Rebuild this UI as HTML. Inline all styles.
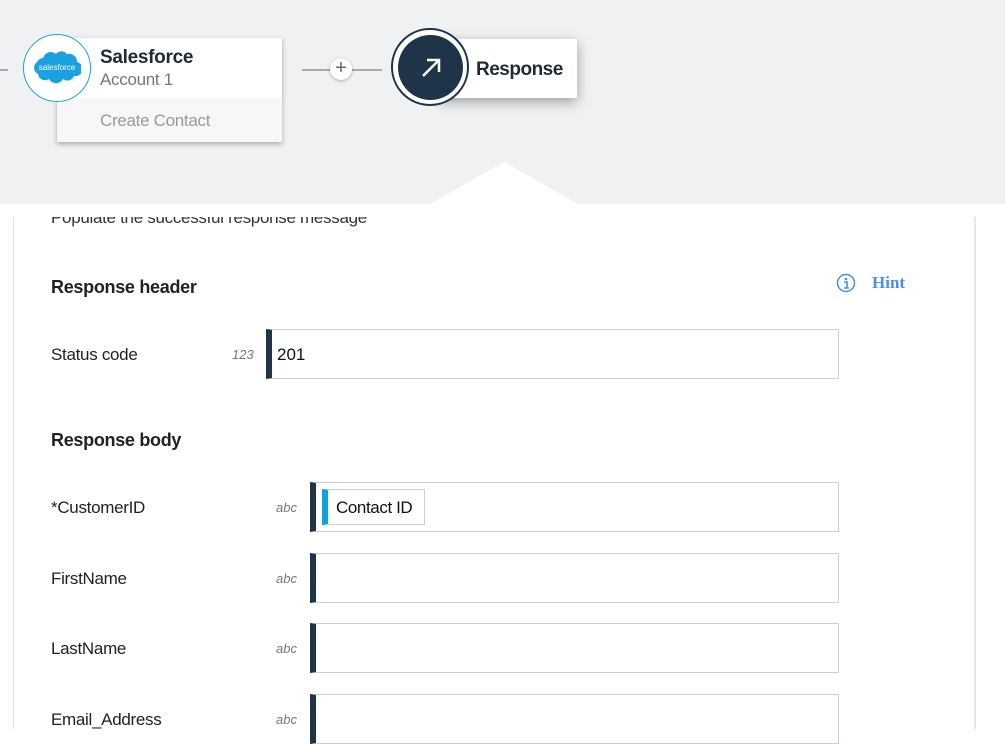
<!DOCTYPE html>
<html><head><meta charset="utf-8"><style>
body{margin:0;width:1005px;height:729px;overflow:hidden;background:#fff;font-family:"Liberation Sans",Arial,sans-serif;position:relative}
.top{position:absolute;left:0;top:0;width:1005px;height:204px;background:#f0f1f3;z-index:2;overflow:hidden}
.abs{position:absolute}
.lbl{position:absolute;left:51px;font-size:17px;color:#222;letter-spacing:-0.3px}
.typ{position:absolute;font-size:13px;font-style:italic;color:#777}
.fld{position:absolute;left:310px;width:529px;height:50px;border:1px solid #c8d0d2;border-left:6px solid #1f3349;box-sizing:border-box}
h3{position:absolute;left:51px;margin:0;font-size:18px;font-weight:bold;color:#222;letter-spacing:-0.3px}
</style></head><body>
<div class="top">
  <div class="abs" style="left:0;top:69px;width:8px;height:2px;background:#aaa"></div>
  <div class="abs" style="left:57px;top:38px;width:225px;height:104px;background:#fff;box-shadow:0 2px 5px rgba(0,0,0,.3)"></div>
  <div class="abs" style="left:57px;top:98px;width:225px;height:44px;background:#f7f7f7"></div>
  <div class="abs" style="left:100px;top:47px;font-size:19px;font-weight:bold;color:#1f2a36;letter-spacing:-0.3px">Salesforce</div>
  <div class="abs" style="left:100px;top:70px;font-size:17px;color:#777;letter-spacing:-0.3px">Account 1</div>
  <div class="abs" style="left:100px;top:111px;font-size:17px;color:#999;letter-spacing:-0.3px">Create Contact</div>
  <div class="abs" style="left:23px;top:34px;width:66px;height:66px;border:1px solid #1ba1e2;border-radius:50%;background:#fff"></div>
  <svg class="abs" style="left:33px;top:50px" width="48" height="34" viewBox="0 0 48 34"><path d="M10 8a8 8 0 0 1 13-4 7 7 0 0 1 11 0 8 8 0 0 1 10 8 7 7 0 0 1-3 14 7 7 0 0 1-11 3 8 8 0 0 1-14 0 7 7 0 0 1-11-5 7 7 0 0 1-1-12 8 8 0 0 1 6-4z" fill="#1ba1e2"/><text x="24" y="20" font-size="8" fill="#fff" text-anchor="middle" font-family="Liberation Sans">salesforce</text></svg>
  <div class="abs" style="left:302px;top:69px;width:80px;height:2px;background:#aaa"></div>
  <div class="abs" style="left:330px;top:58px;width:22px;height:22px;border-radius:50%;background:#fff;box-shadow:0 1px 3px rgba(0,0,0,.3);text-align:center;line-height:21px;font-size:20px;color:#666">+</div>
  <div class="abs" style="left:440px;top:39px;width:137px;height:59px;background:#fff;box-shadow:0 4px 12px rgba(0,0,0,.35)"></div>
  <div class="abs" style="left:476px;top:59px;font-size:19px;font-weight:bold;color:#1f2a36;letter-spacing:-0.5px">Response</div>
  <div class="abs" style="left:391px;top:28px;width:78px;height:78px;border-radius:50%;border:2px solid #1f3349;background:#fff;box-sizing:border-box"></div>
  <div class="abs" style="left:398px;top:35px;width:65px;height:65px;border-radius:50%;background:#1f3349"></div>
  <svg class="abs" style="left:419px;top:56px" width="24" height="24" viewBox="0 0 24 24"><path d="M4 20L20 4M8 4h12v12" stroke="#fff" stroke-width="2.5" fill="none"/></svg>
  <svg class="abs" style="left:430px;top:162px" width="148" height="42"><path d="M0 42L74 0L148 42Z" fill="#fff"/></svg>
</div>
<div class="abs" style="left:13px;top:217px;width:1px;height:512px;background:#e3e3e3"></div>
<div class="abs" style="left:974px;top:217px;width:2px;height:512px;background:#e6e6e6"></div>
<div class="abs" style="left:0;top:217px;width:1005px;height:20px;overflow:hidden">
  <div class="abs" style="left:51px;top:-9px;font-size:17px;color:#333;letter-spacing:-0.3px">Populate the successful response message</div>
</div>
<h3 style="top:277px">Response header</h3>
<svg class="abs" style="left:836px;top:273px" width="20" height="20"><circle cx="10" cy="10" r="8.5" stroke="#4a8fe7" stroke-width="1.5" fill="none"/><circle cx="10" cy="6" r="1.3" fill="#4a8fe7"/><path d="M8 9h3v6M8 15h5" stroke="#4a8fe7" stroke-width="1.6" fill="none"/></svg>
<div class="abs" style="left:872px;top:273px;font-family:'Liberation Serif',serif;font-weight:bold;font-size:17px;color:#4a8fe7">Hint</div>
<div class="lbl" style="top:345px">Status code</div>
<div class="typ" style="left:232px;top:347px">123</div>
<div class="fld" style="left:266px;top:329px;width:573px"></div>
<div class="abs" style="left:277px;top:345px;font-size:17px;color:#111">201</div>
<h3 style="top:430px">Response body</h3>
<div class="lbl" style="top:498px">*CustomerID</div>
<div class="typ" style="left:276px;top:500px">abc</div>
<div class="fld" style="top:482px"></div>
<div class="abs" style="left:322px;top:489px;width:103px;height:36px;box-sizing:border-box;border:1px solid #c8d0d2;border-left:6px solid #0ea3e0"></div>
<div class="abs" style="left:336px;top:498px;font-size:17px;color:#111;letter-spacing:-0.4px">Contact ID</div>
<div class="lbl" style="top:569px">FirstName</div>
<div class="typ" style="left:276px;top:571px">abc</div>
<div class="fld" style="top:553px"></div>
<div class="lbl" style="top:639px">LastName</div>
<div class="typ" style="left:276px;top:641px">abc</div>
<div class="fld" style="top:623px"></div>
<div class="lbl" style="top:710px">Email_Address</div>
<div class="typ" style="left:276px;top:712px">abc</div>
<div class="fld" style="top:694px"></div>
</body></html>
